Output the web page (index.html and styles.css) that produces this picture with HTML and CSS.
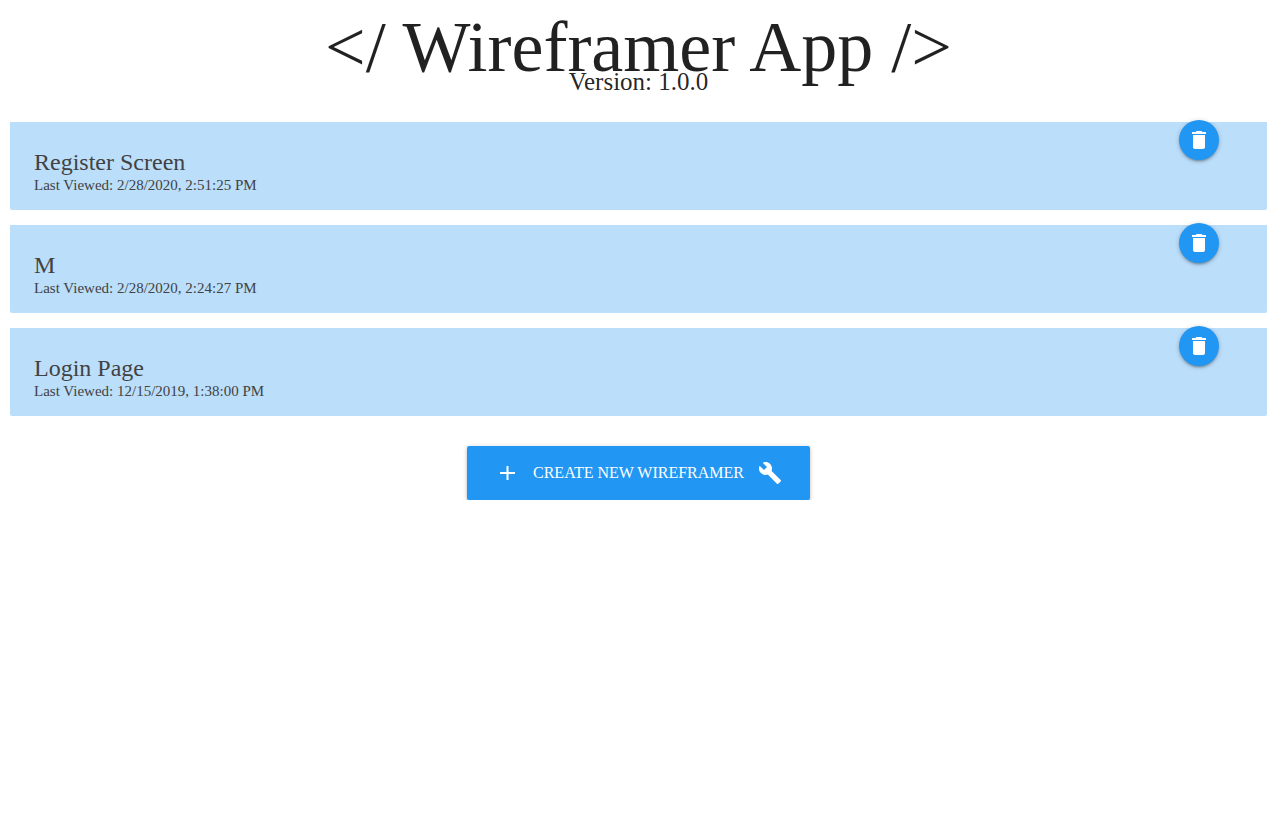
FILE: index.html
```html
<!DOCTYPE html>
<html lang="en">
<head>
<meta charset="utf-8">
<title>Wireframer App</title>
<link rel="stylesheet" href="styles.css">
</head>
<body>
<header class="banner">
  <h1 class="title">&lt;/ Wireframer App /&gt;</h1>
  <p class="version">Version: 1.0.0</p>
</header>
<main class="dashboard">
  <ul class="cards">
    <li class="card">
      <h2 class="card-title">Register Screen</h2>
      <p class="card-date">Last Viewed: 2/28/2020, 2:51:25 PM</p>
      <button class="delete" type="button" aria-label="Delete Register Screen"><svg class="icon" viewBox="0 0 24 24"><path d="M6 19c0 1.100.9 2 2 2h8c1.100 0 2-.9 2-2V7H6v12zM19 4h-3.500l-1-1h-5l-1 1H5v2h14V4z"/></svg></button>
    </li>
    <li class="card">
      <h2 class="card-title">M</h2>
      <p class="card-date">Last Viewed: 2/28/2020, 2:24:27 PM</p>
      <button class="delete" type="button" aria-label="Delete M"><svg class="icon" viewBox="0 0 24 24"><path d="M6 19c0 1.100.9 2 2 2h8c1.100 0 2-.9 2-2V7H6v12zM19 4h-3.500l-1-1h-5l-1 1H5v2h14V4z"/></svg></button>
    </li>
    <li class="card">
      <h2 class="card-title">Login Page</h2>
      <p class="card-date">Last Viewed: 12/15/2019, 1:38:00 PM</p>
      <button class="delete" type="button" aria-label="Delete Login Page"><svg class="icon" viewBox="0 0 24 24"><path d="M6 19c0 1.100.9 2 2 2h8c1.100 0 2-.9 2-2V7H6v12zM19 4h-3.500l-1-1h-5l-1 1H5v2h14V4z"/></svg></button>
    </li>
  </ul>
  <button class="create" type="button">
    <svg class="icon" viewBox="0 0 24 24"><path d="M20 13h-6.500v6h-2v-6H5v-2h6.500V5h2v6H20v2z"/></svg>
    <span>Create New Wireframer</span>
    <svg class="icon" viewBox="0 0 24 24"><path d="M22.700 19l-9.100-9.100c.9-2.300.4-5-1.500-6.900-2-2-5-2.400-7.400-1.300L9 6 6 9 1.600 4.700C.4 7.100.9 10.100 2.900 12.100c1.900 1.900 4.600 2.400 6.900 1.500l9.100 9.100c.4.4 1 .4 1.400 0l2.300-2.300c.5-.4.5-1.100.1-1.400z"/></svg>
  </button>
</main>
</body>
</html>
```
FILE: styles.css
```css
* { box-sizing: border-box; }

body {
  margin: 0;
  padding: 0 16px 0 10px;
  font-family: "Liberation Serif", "Times New Roman", serif;
  color: rgba(0, 0, 0, 0.87);
}

.banner { text-align: center; }

.title {
  margin: 0;
  padding-top: 9px;
  font-size: 72px;
  font-weight: 400;
  line-height: 76px;
}

.version {
  margin: 0;
  margin-top: -18px;
  font-size: 25px;
  line-height: 30px;
}

.dashboard {
  display: flex;
  flex-direction: column;
  align-items: center;
  gap: 30px;
  padding-top: 25px;
}

.cards {
  display: flex;
  flex-direction: column;
  gap: 15px;
  width: 100%;
  margin: 0;
  padding: 0;
  list-style: none;
}

.card {
  position: relative;
  padding: 24px 24px 18px;
  border-radius: 0 0 2px 2px;
  background: #bbdefb;
  color: #424242;
}

.card-title {
  margin: 0;
  font-size: 24px;
  font-weight: 400;
  line-height: 32px;
}

.card-date {
  margin: 0;
  font-size: 15px;
  line-height: 14px;
}

.delete {
  position: absolute;
  top: -2px;
  right: 48px;
  display: flex;
  align-items: center;
  justify-content: center;
  width: 40px;
  height: 40px;
  padding: 0;
  border: 0;
  border-radius: 50%;
  background: #2196f3;
  color: #fff;
  box-shadow: 0 2px 2px 0 rgba(0, 0, 0, 0.14), 0 3px 1px -2px rgba(0, 0, 0, 0.12), 0 1px 5px 0 rgba(0, 0, 0, 0.2);
}

.icon {
  width: 24px;
  height: 24px;
  fill: currentColor;
}

.create {
  display: flex;
  align-items: center;
  gap: 14px;
  height: 54px;
  padding: 0 28px;
  border: 0;
  border-radius: 2px;
  background: #2196f3;
  color: #fff;
  font-family: inherit;
  font-size: 16px;
  text-transform: uppercase;
  box-shadow: 0 2px 2px 0 rgba(0, 0, 0, 0.14), 0 3px 1px -2px rgba(0, 0, 0, 0.12), 0 1px 5px 0 rgba(0, 0, 0, 0.2);
}
```
